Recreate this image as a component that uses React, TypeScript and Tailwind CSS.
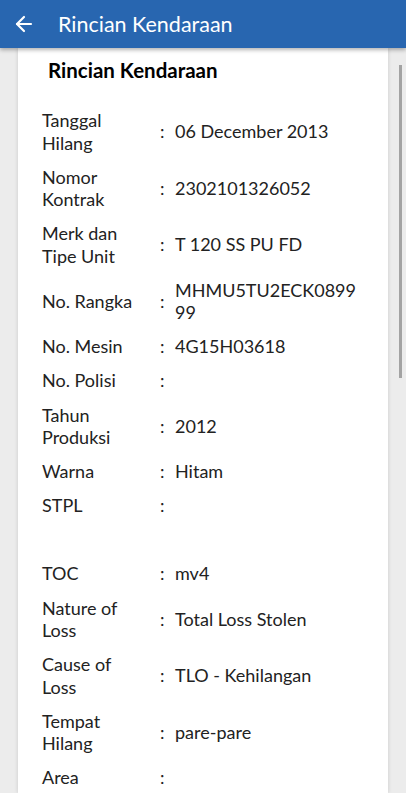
import { ArrowLeft } from 'lucide-react';

type Row = { label: string; value: string };

const firstRows: Row[] = [
  { label: 'Tanggal Hilang', value: '06 December 2013' },
  { label: 'Nomor Kontrak', value: '2302101326052' },
  { label: 'Merk dan Tipe Unit', value: 'T 120 SS PU FD' },
  { label: 'No. Rangka', value: 'MHMU5TU2ECK089999' },
  { label: 'No. Mesin', value: '4G15H03618' },
  { label: 'No. Polisi', value: '' },
  { label: 'Tahun Produksi', value: '2012' },
  { label: 'Warna', value: 'Hitam' },
  { label: 'STPL', value: '' },
];

const secondRows: Row[] = [
  { label: 'TOC', value: 'mv4' },
  { label: 'Nature of Loss', value: 'Total Loss Stolen' },
  { label: 'Cause of Loss', value: 'TLO - Kehilangan' },
  { label: 'Tempat Hilang', value: 'pare-pare' },
  { label: 'Area', value: '' },
];

function DetailRow({ label, value }: Row) {
  return (
    <div className="flex items-center text-[18px] leading-[22.5px] text-[#222222]">
      <div className="w-[100px] shrink-0">{label}</div>
      <div className="w-[33px] shrink-0 pl-[18px]">:</div>
      <div className="flex-1 break-all">{value}</div>
    </div>
  );
}

export default function App() {
  return (
    <div className="relative w-[406px] h-[800px] overflow-hidden bg-[#ececec] flex flex-col" style={{ fontFamily: 'Lato, "Noto Sans", sans-serif' }}>
      <header className="h-12 shrink-0 bg-[#2866b0] flex items-center z-10 shadow-[0_2px_4px_rgba(0,0,0,0.3)]">
        <ArrowLeft size={24} strokeWidth={2.2} className="text-white ml-[12px]" />
        <h1 className="ml-[22px] text-[21.5px] text-white">Rincian Kendaraan</h1>
      </header>

      <main className="flex-1 px-[18px] overflow-hidden">
        <div className="h-full bg-white shadow-[0_0_4px_rgba(0,0,0,0.15)] pl-[24px] pr-[27px]">
          <h2 className="pt-[10px] pl-[6px] text-[20.5px] leading-[24px] font-bold text-black">Rincian Kendaraan</h2>
          <div className="mt-[27px] flex flex-col gap-[11.6px]">
            {firstRows.map(r => <DetailRow key={r.label} {...r} />)}
            <div className="h-[22.5px]" />
            {secondRows.map(r => <DetailRow key={r.label} {...r} />)}
          </div>
        </div>
      </main>

      <div className="h-[7px] shrink-0 bg-white" />

      <div className="absolute right-[4px] top-[65px] w-[3px] h-[313px] bg-[#a3a3a3]" />
    </div>
  );
}
